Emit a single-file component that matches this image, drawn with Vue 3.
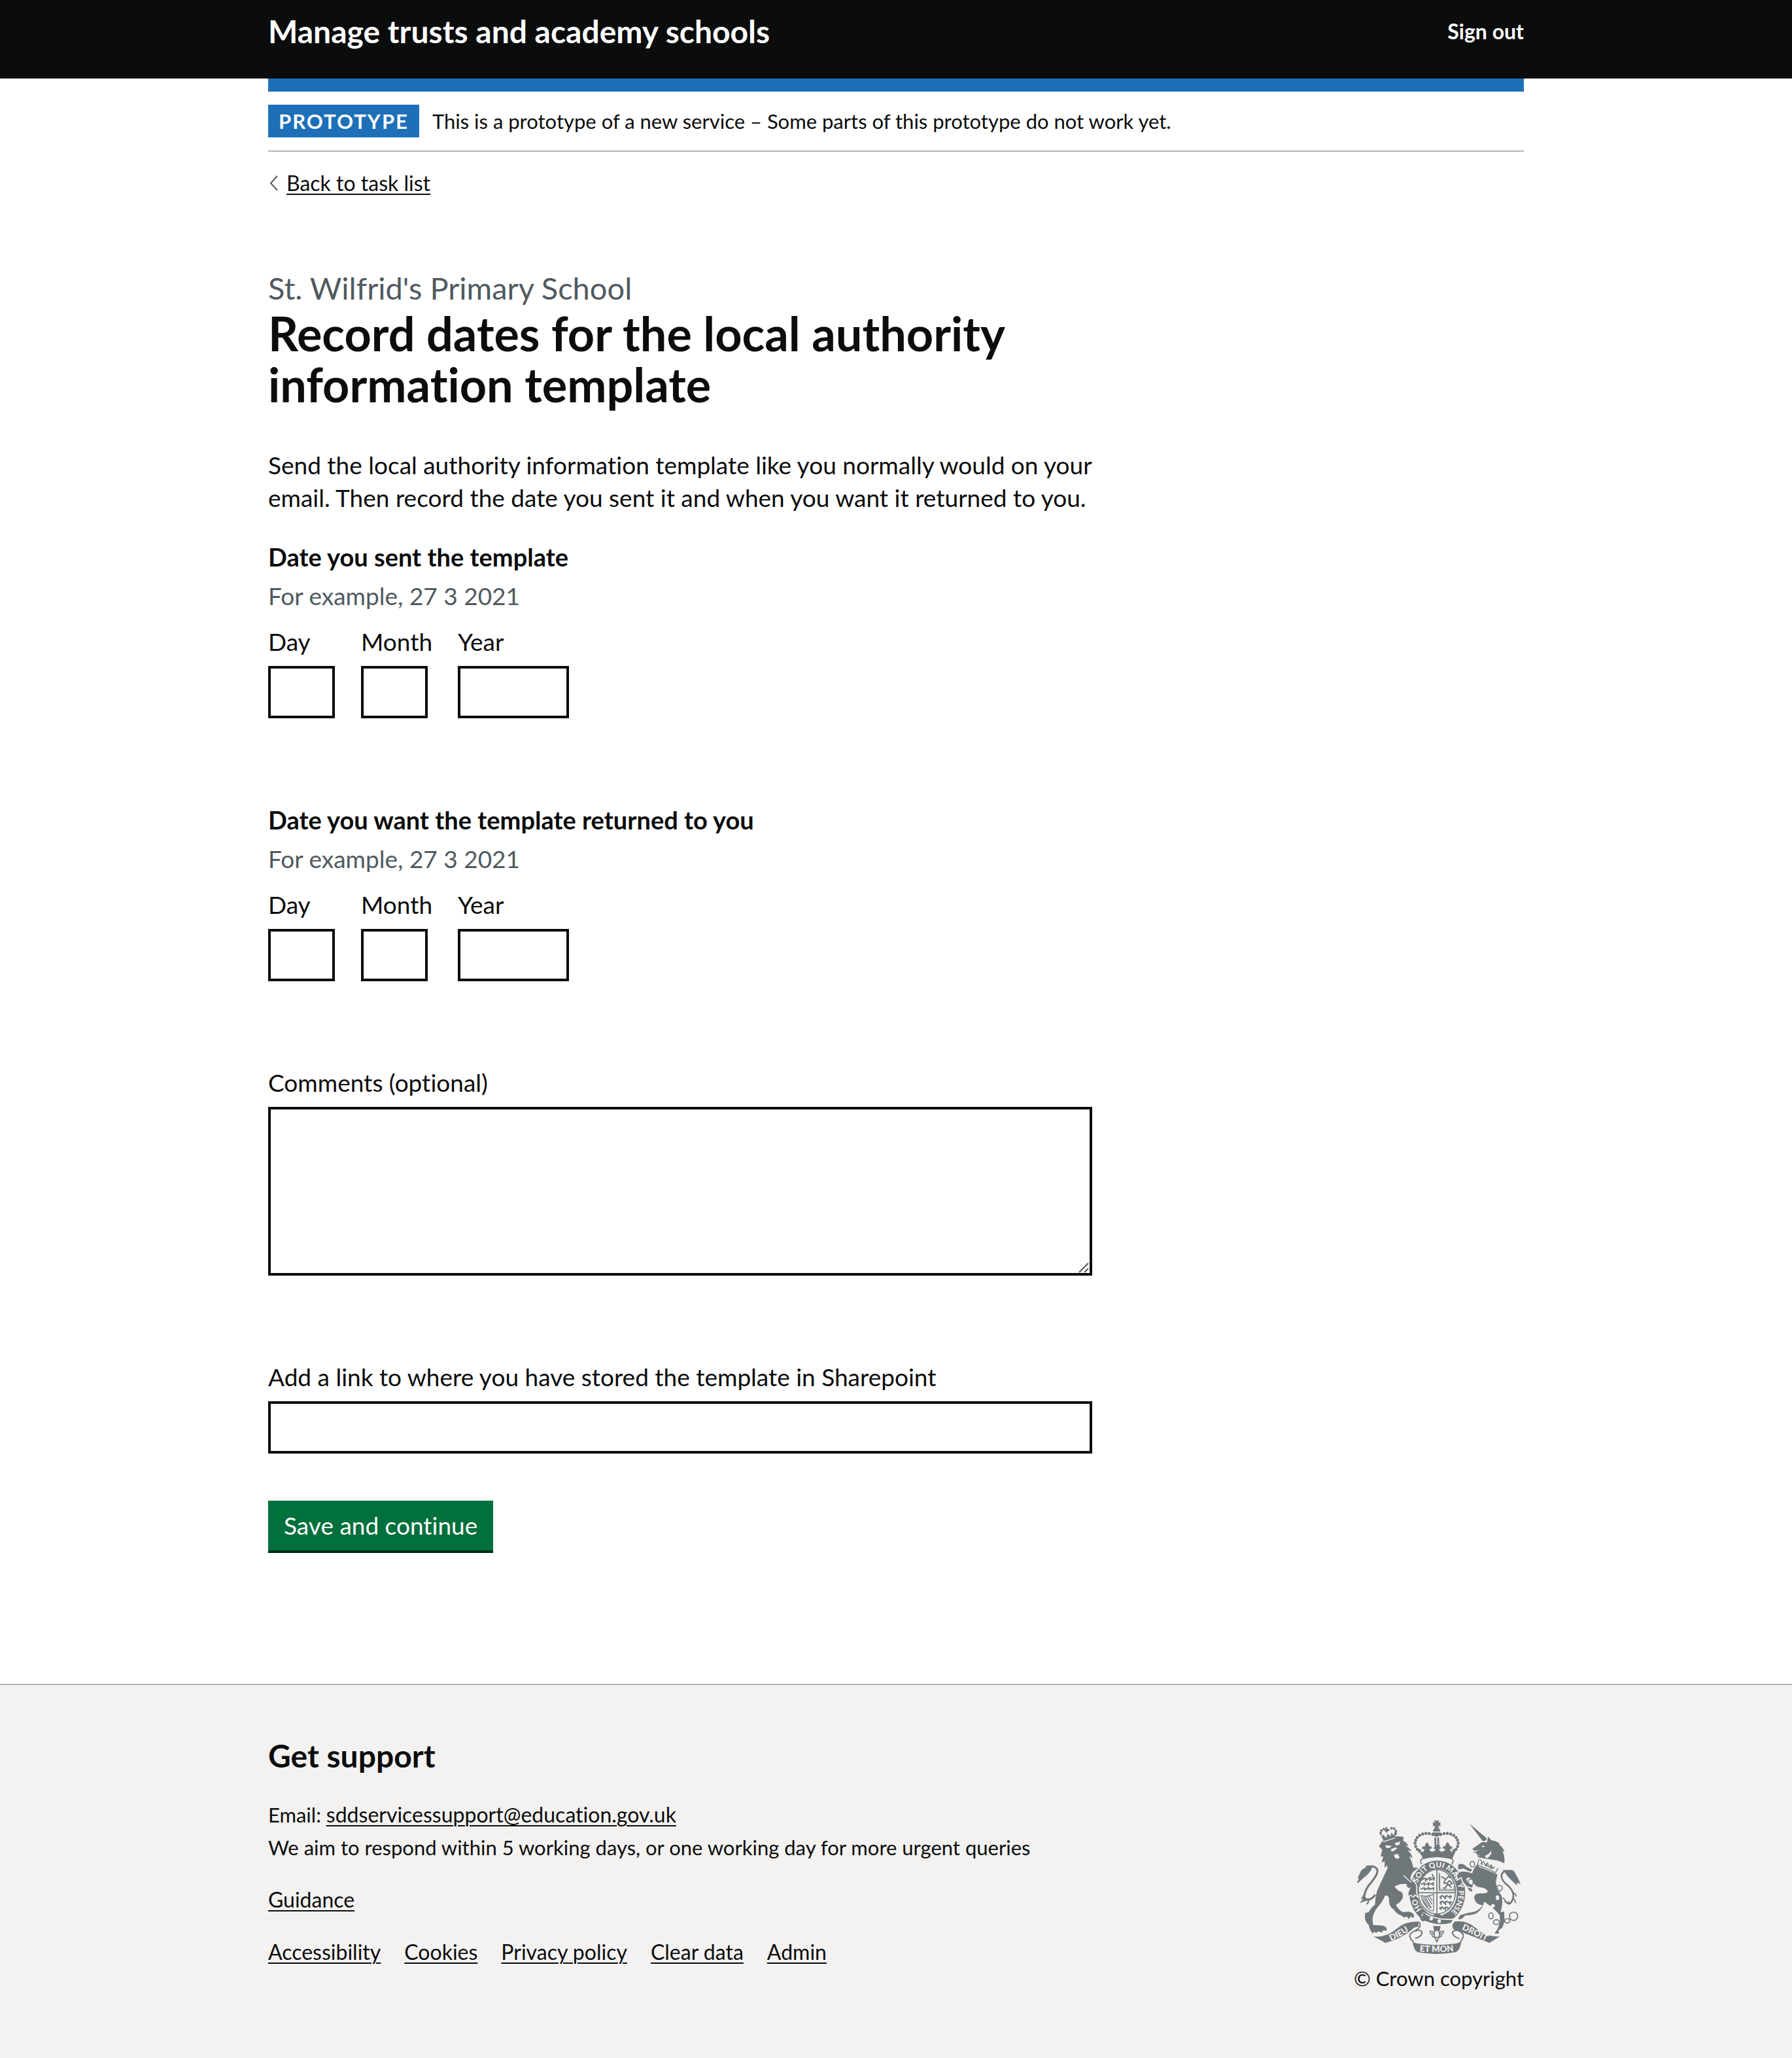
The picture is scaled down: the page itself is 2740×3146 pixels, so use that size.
<script setup>
import { reactive } from 'vue'

const form = reactive({
  sent: { day: '', month: '', year: '' },
  returned: { day: '', month: '', year: '' },
  comments: '',
  link: ''
})

const dateGroups = [
  { id: 'sent', legend: 'Date you sent the template' },
  { id: 'returned', legend: 'Date you want the template returned to you' }
]

const dateParts = [
  { id: 'day', label: 'Day' },
  { id: 'month', label: 'Month' },
  { id: 'year', label: 'Year' }
]

const footerLinks = ['Accessibility', 'Cookies', 'Privacy policy', 'Clear data', 'Admin']

// Pearls along the two arches of the central crown
const pearls = [
  [419, 130], [403, 126], [388, 125], [373, 128], [359, 134], [348, 144], [341, 156], [338, 170], [341, 185], [348, 198],
  [456, 130], [471, 126], [486, 125], [501, 128], [515, 134], [526, 144], [533, 156], [536, 170], [533, 185], [526, 198]
]
</script>

<template>
  <div class="page">
    <header class="header">
      <div class="container header-inner">
        <a class="service-name" href="#">Manage trusts and academy schools</a>
        <a class="sign-out" href="#">Sign out</a>
      </div>
    </header>

    <div class="container">
      <div class="phase-banner">
        <strong class="tag">PROTOTYPE</strong>
        <span>This is a prototype of a new service – Some parts of this prototype do not work yet.</span>
      </div>

      <a class="back-link" href="#">
        <svg class="chevron" viewBox="0 0 16 24" aria-hidden="true"><path d="M14 1 4 12l10 11" /></svg>
        <span>Back to task list</span>
      </a>

      <main class="main">
        <span class="caption">St. Wilfrid's Primary School</span>
        <h1>Record dates for the local authority information template</h1>
        <p class="intro">
          Send the local authority information template like you normally would on your email. Then record the date
          you sent it and when you want it returned to you.
        </p>

        <form @submit.prevent>
          <fieldset v-for="group in dateGroups" :key="group.id" class="group" :aria-describedby="group.id + '-hint'">
            <legend>{{ group.legend }}</legend>
            <div :id="group.id + '-hint'" class="hint">For example, 27 3 2021</div>
            <div class="date-input">
              <div v-for="part in dateParts" :key="part.id" class="date-item">
                <label :for="group.id + '-' + part.id">{{ part.label }}</label>
                <input
                  :id="group.id + '-' + part.id"
                  v-model="form[group.id][part.id]"
                  :class="['field', part.id]"
                  type="text"
                  inputmode="numeric"
                />
              </div>
            </div>
          </fieldset>

          <div class="group">
            <label for="comments">Comments (optional)</label>
            <div class="textarea-wrap">
              <textarea id="comments" v-model="form.comments" class="field"></textarea>
              <svg class="grip" viewBox="0 0 16 16" aria-hidden="true"><path d="M1 15 15 1M9 15l6-6" /></svg>
            </div>
          </div>

          <div class="group last">
            <label for="link">Add a link to where you have stored the template in Sharepoint</label>
            <input id="link" v-model="form.link" class="field" type="text" />
          </div>

          <button class="button" type="submit">Save and continue</button>
        </form>
      </main>
    </div>

    <footer class="footer">
      <div class="container footer-inner">
        <div class="support">
          <h2>Get support</h2>
          <p>
            Email: <a href="#">sddservicessupport@education.gov.uk</a><br />
            We aim to respond within 5 working days, or one working day for more urgent queries
          </p>
          <p><a href="#">Guidance</a></p>
          <ul class="links">
            <li v-for="item in footerLinks" :key="item"><a href="#">{{ item }}</a></li>
          </ul>
        </div>

        <a class="copyright" href="#">
          <svg class="crest" viewBox="72 66 750 612" aria-hidden="true">
            <defs>
              <path id="garter-top" d="M350 353A97 115 0 0 1 527 345" />
              <path id="garter-right" d="M529 350A97 115 0 0 1 496 490" />
              <path id="garter-left" d="M372 478A97 115 0 0 1 345 420" />
              <path id="scroll-left" d="M213 624Q272 602 322 562" />
              <path id="scroll-mid" d="M344 664Q436 676 530 663" />
              <path id="scroll-right" d="M547 563Q612 592 668 622" />
            </defs>

            <!-- central crown -->
            <g class="ink">
              <path d="M425 66h24l-7 12 12-6v22l-12-6 7 12h-24l7-12-12 6V72l12 6z" />
              <path d="M420 116q2-17 17-17t17 17zM417 121h40q-2 18-20 19q-18-1-20-19z" />
              <circle v-for="(p, i) in pearls" :key="i" :cx="p[0]" :cy="p[1]" r="7" />
              <path d="M427 143h8v33h-8zM440 143h8v33h-8z" />
              <path d="M354 205l20 6 8-12-12-4q-2-13 10-10l2 0q1-10 11-19q9 9 11 19l0 0q12-2 11 9l-12 3 7 11 16 0 8-12-8 2q-7-12 4-11l-4-10h27l-4 10q11-1 4 11l-8-2 8 12 16 0 8-11-11-3q-3-13 10-10l0 0q1-10 11-19q10 9 11 19l0 0q12-3 11 10l-12 4 8 12 20-6-17 39q-70-19-131 0z" />
              <path d="M350 195l18 6-14 14zM524 195l-18 6 14 14z" />
            </g>
            <path class="line" stroke-width="5" d="M372 240q65-17 132 0q9 5 8 17l-6 10M372 240q-10 6-8 17l5 9" />

            <!-- garter and shield -->
            <ellipse class="ring" cx="440" cy="396" rx="109" ry="127" />
            <ellipse class="line" stroke-width="5" cx="438" cy="393" rx="85" ry="102" />
            <path class="line" stroke-width="5" d="M438 290v205M352 397h172" />
            <g class="line" stroke-width="6">
              <path d="M366 338l16-7 8 7 12-8 10 7 14-8M364 359l14-6 12 6 9-7 12 6 15-7M364 381l14-6 12 6 9-7 12 6 15-7M374 331l-5 10M389 329l-4 18M410 323l-5 18M425 325v17M380 351v15M401 350l-3 17M421 350v16M382 373v13M402 373v13M423 373v13" />
              <path d="M450 418l14-8 8 9 11-8 15 8 9-6M450 444l14-8 8 9 11-8 15 8 9-6M448 470l14-8 8 9 11-8 15 8M457 410v17M477 410v17M499 408v17M457 435v18M477 435v18M498 435v18M457 461v16M477 461v16M416 311l8 18" />
              <path d="M459 323l18 12-7 17 15 2 10-12 13 12-12 8-13 0-5 14-12-1M478 337l13-15 9 8M486 355l19 19" />
            </g>
            <path class="line" stroke-width="3" d="M452 312v70h66M448 304v84h73M518 354v33" />
            <path class="line" stroke-width="4" d="M365 410q28 9 58-6v75q-12 5-23-7q-23-18-35-62zM374 416l35 54M383 416l30 50M393 415l22 34M404 413l13 21M369 423l27 40" />
            <path class="ink" d="M427 495h23l11 9-8 10-36-7zM469 499q14-13 29-14l-11 24z" />
            <g class="motto ring-text">
              <text><textPath href="#garter-top" startOffset="50%">SOIT QUI MAL</textPath></text>
              <text><textPath href="#garter-right" startOffset="50%">Y PENSE</textPath></text>
              <text><textPath href="#garter-left" startOffset="50%">HO</textPath></text>
            </g>
            <path class="ink edge" d="M374 488q65 38 142 30l-13 20q-70 18-137-18z" />
            <path class="line" stroke-width="7" d="M385 483q-17-8-15 7q20 3 8 16q-11 1-13 11q9 13 19 4" />
            <g class="paper-fill"><circle cx="412" cy="516" r="8" /><circle cx="449" cy="528" r="8" /></g>

            <!-- lion -->
            <path class="ink outlined" d="M172 184L189 160L206 153L253 138L285 140L284 160Q303 168 306 184L292 180Q316 194 322 206L304 202Q322 220 327 237L312 230Q324 252 330 282Q344 280 352 284L338 294Q320 306 316 332L329 346Q341 352 344 372L342 396L348 412L336 404L330 414L318 406L308 412Q306 394 315 381L302 370L293 356L269 358L244 368Q252 384 276 394Q286 408 280 424Q270 444 250 452Q260 474 282 486L312 484Q332 490 334 504L328 514L319 505L310 518L301 506L287 511L275 502Q253 494 240 474Q220 460 219 440L218 420Q212 408 200 410Q188 440 172 456Q152 480 146 500Q140 520 146 545L174 547Q200 547 208 560L206 574L195 568L184 580L170 574L161 581L148 576L144 586L133 569L125 545L114 532Q104 510 110 490L125 486Q140 460 154 452Q156 400 172 370L200 310L212 285L209 271L198 284L199 253L184 259L192 231L180 230L187 200Z" />
            <g class="ink">
              <path d="M177 127l17 31 51-12 6-30-7 1-4 18-10-15-6 20-11-15-8 21-15-18-2 12-8-18z" />
              <path d="M202 95l8 3 3 7 8 0-1 9-8 0-2 8-8-3 0-6-8-1 1-8 7 0z" />
              <circle cx="180" cy="124" r="6" /><circle cx="184" cy="112" r="6" /><circle cx="194" cy="104" r="5" /><circle cx="230" cy="101" r="6" /><circle cx="242" cy="103" r="6" /><circle cx="250" cy="113" r="6" /><circle cx="250" cy="126" r="6" />
              <path d="M141 278q-2 22-36 48l-31 28-2-6 9-17-6 0q9-24 17-37 21-18 49-16z" />
            </g>
            <path class="line" stroke-width="9" d="M112 279q41-10 53 12q4 20-27 57q-31 34-33 68q5 15 20 12q17-2 30-22" />
            <path class="line" stroke-width="7" d="M105 406l-9 16 6-1M109 420l-15 17 29-10q4 15-7 22" />
            <g class="paper-fill">
              <path d="M201 179l30 3-10 10h-14zM243 170l28-8-6 15-13 4z" />
              <path d="M225 198l25-9 6 6-8 4q-9 13-23 6l6-5zM243 221l17-1 7 16q-6 8-17 4-8-4-8-13z" />
              <path d="M288 369l15-8-8-5zM302 378l20-5-11 7z" />
            </g>
            <path class="thin" d="M192 163l54-17M285 318q17 18 37 31" />

            <!-- unicorn -->
            <g class="ink outlined">
              <path d="M536 268Q556 258 574 278L600 292L592 302L560 286L536 290ZM570 345L598 378L600 394L586 386L576 368L564 362Z" />
              <path d="M622 268L716 312L708 350Q716 384 735 412Q744 440 730 486L747 484L748 530L738 558L720 570L724 584L702 584L718 560L728 530L726 500L712 484L690 462Q670 450 656 438Q648 470 622 490Q600 502 570 500L550 518L534 518L544 500L580 490Q630 486 648 454Q612 450 609 416Q612 400 640 400Q664 402 672 392Q664 374 636 372Q604 368 602 336L584 326L572 334L580 352L602 362L600 374L574 366L558 346L550 324L536 334L530 318L542 302Q570 296 600 308Q604 290 622 268Z" />
              <path d="M588 81L670 150L652 166Z" />
              <path d="M601 196L646 164L668 166L673 139L688 157Q712 158 728 174L724 176Q742 190 748 208L739 206Q752 232 747 262L718 250L636 236L624 232L640 216L624 228Q622 214 612 214L604 212L612 204Q602 202 601 196Z" />
            </g>
            <path class="ink" d="M761 297q28-8 36 12l13 24 12 27-16-8-1 14-38-37-27-36z" transform="translate(0 -2)" />
            <path class="line" stroke-width="8" d="M783 301q-44-15-49 20q2 23 31 44q37 36 17 70q-11 24-31 0" />
            <path class="line" stroke-width="5" d="M785 398q18 3 16 16M789 425q9 7 10 20M768 437l-1 15M751 438q-2-13-10-17" />
            <path class="paper-fill" d="M632 238l6 5 7 14 13-8 5 16 15-7 7 17 15-6 8 13 9-2 8 8-12 24-85-35z" />
            <path class="line" stroke-width="4" d="M632 242l-8 27 83 36 12-22M638 243l6 18 8-8 8 18 10-10 7 18 11-10 6 17 10-8" />
            <path class="ink" d="M644 255l6 16-12-5zM666 262l6 18-14-6zM687 273l6 17-14-6z" />
            <path class="paper-fill" d="M642 184l16-3-7 9zM607 207l23-6-17 11zM657 229q27-10 29-27q8 20-18 37z" />
            <g class="chain">
              <ellipse cx="601" cy="266" rx="10" ry="13" /><ellipse cx="593" cy="349" rx="12" ry="15" />
              <circle cx="725" cy="376" r="13" /><ellipse cx="686" cy="503" rx="10" ry="14" />
              <ellipse cx="711" cy="532" rx="14" ry="11" /><ellipse cx="761" cy="526" rx="12" ry="10" />
              <circle cx="790" cy="505" r="19" />
            </g>
            <g class="paper-fill"><ellipse cx="716" cy="420" rx="8" ry="11" /><ellipse cx="695" cy="457" rx="9" ry="8" /></g>

            <!-- fleur-de-lis and scroll -->
            <path class="ink" d="M421 550h34l-4 22h-26z" />
            <path class="line" stroke-width="5" d="M437 563q-19 20-8 39l9 21 9-21q11-19-10-39zM430 600q-20 0-12-14-14 0-11-12 14-4 20 15M445 600q20 0 12-14 14 0 11-12-14-4-20 15M424 602h28" />
            <path class="ink" d="M147 597Q205 605 256 560Q295 527 354 530V553Q334 553 323 567Q267 612 202 627ZM728 597Q668 604 614 557Q576 524 524 529Q502 539 513 564Q570 584 679 627ZM326 618Q334 628 350 630Q440 643 526 630Q540 628 550 614Q548 660 522 670Q440 686 350 670Q330 660 326 618Z" />
            <path class="line" stroke-width="6" d="M354 530q21 22-18 42-26 14-22 27 4 14 16 22M338 574q16-12 31 1 4 22-30 32M524 530q-24 21 12 41 29 12 22 30-2 8-10 18M540 572q-18-8-31 6 0 18 32 30" />
            <g class="motto scroll-text">
              <text><textPath href="#scroll-left" startOffset="50%">DIEU</textPath></text>
              <text><textPath href="#scroll-mid" startOffset="50%">ET MON</textPath></text>
              <text><textPath href="#scroll-right" startOffset="50%">DROIT</textPath></text>
            </g>
          </svg>
          <span>© Crown copyright</span>
        </a>
      </div>
    </footer>
  </div>
</template>

<style>
body {
  margin: 0;
  background: #fff;
}
</style>

<style scoped>
.page {
  color: #0b0c0c;
  font-family: Lato, "Liberation Sans", sans-serif;
  font-size: 37px;
  line-height: 50px;
  font-variant-ligatures: none;
}

.page * {
  box-sizing: border-box;
}

a {
  color: inherit;
  text-decoration-thickness: 2px;
  text-underline-offset: 4px;
}

.container {
  max-width: 1920px;
  margin: 0 auto;
}

.header {
  height: 120px;
  padding-top: 20px;
  background: #0b0c0c;
  color: #fff;
}

.header-inner {
  display: flex;
  align-items: center;
  justify-content: space-between;
}

.header a {
  font-weight: 700;
  text-decoration: none;
}

.service-name {
  font-size: 48px;
  line-height: 56px;
}

.sign-out {
  font-size: 32px;
}

.phase-banner {
  display: flex;
  align-items: center;
  gap: 20px;
  padding: 20px 0;
  border-top: 20px solid #1d70b8;
  border-bottom: 2px solid #b1b4b6;
  font-size: 31px;
}

.tag {
  padding: 0 16px;
  background: #1d70b8;
  color: #fff;
  letter-spacing: 2px;
}

.back-link {
  display: flex;
  align-items: center;
  gap: 12px;
  width: fit-content;
  margin-top: 30px;
  font-size: 32px;
  line-height: 36px;
  text-decoration: none;
}

.back-link span {
  text-decoration: underline 2px;
  text-underline-offset: 4px;
}

.chevron {
  width: 16px;
  height: 24px;
  fill: none;
  stroke: #505a5f;
  stroke-width: 2;
}

.main {
  max-width: 1260px;
  padding: 112px 0 204px;
}

.caption {
  display: block;
  color: #505a5f;
  font-size: 47px;
  line-height: 60px;
}

h1 {
  margin: 0;
  font-size: 72px;
  line-height: 78px;
}

.intro {
  margin: 60px 0 40px;
}

.group {
  min-width: 0;
  margin: 0 0 130px;
  padding: 0;
  border: 0;
}

.group.last {
  margin-bottom: 72px;
}

legend {
  padding: 0;
  font-size: 38px;
  font-weight: 700;
}

.hint {
  margin: 10px 0 20px;
  color: #505a5f;
}

.date-input {
  display: flex;
  gap: 40px;
}

.date-item:nth-child(2) {
  width: 108px;
}

label {
  display: block;
  margin-bottom: 12px;
}

.field {
  display: block;
  width: 100%;
  height: 80px;
  margin: 0;
  padding: 10px;
  border: 4px solid #0b0c0c;
  border-radius: 0;
  background: #fff;
  color: inherit;
  font: inherit;
}

.field.day,
.field.month {
  width: 102px;
}

.field.year {
  width: 170px;
}

.textarea-wrap {
  position: relative;
}

textarea.field {
  height: 258px;
  resize: none;
}

.grip {
  position: absolute;
  right: 5px;
  bottom: 4px;
  width: 16px;
  height: 16px;
  fill: none;
  stroke: #555;
  stroke-width: 2;
}

.button {
  display: block;
  height: 76px;
  padding: 0 24px;
  border: 0;
  background: #00703c;
  box-shadow: 0 4px 0 #002d18;
  color: #fff;
  font: inherit;
}

.footer {
  padding: 78px 0 97px;
  border-top: 2px solid #b1b4b6;
  background: #f3f2f1;
  font-size: 31px;
}

.footer-inner {
  display: flex;
  align-items: flex-end;
  justify-content: space-between;
}

.support {
  margin-bottom: 40px;
}

.support a {
  font-size: 32px;
}

h2 {
  margin: 0 0 35px;
  font-size: 48px;
  line-height: 60px;
}

.footer p {
  margin: 0 0 30px;
}

.links {
  display: flex;
  gap: 36px;
  margin: 0;
  padding: 0;
  list-style: none;
}

.copyright {
  display: flex;
  flex-direction: column;
  align-items: center;
  gap: 12px;
  text-decoration: none;
}

.crest {
  width: 250px;
  height: 204px;
  overflow: visible;
}

.ink {
  fill: #6f777b;
}

.edge {
  stroke: #f3f2f1;
  stroke-width: 5;
}

.outlined {
  stroke: #f3f2f1;
  stroke-width: 10;
  paint-order: stroke;
}

.line,
.ring,
.chain {
  fill: none;
  stroke: #6f777b;
}

.ring {
  stroke-width: 38;
}

.chain {
  stroke-width: 5;
}

.thin {
  fill: none;
  stroke: #f3f2f1;
  stroke-width: 4;
}

.paper-fill,
.motto {
  fill: #f3f2f1;
}

.motto {
  font-weight: 900;
  text-anchor: middle;
}

.ring-text {
  font-size: 35px;
}

.scroll-text {
  font-size: 40px;
}
</style>
